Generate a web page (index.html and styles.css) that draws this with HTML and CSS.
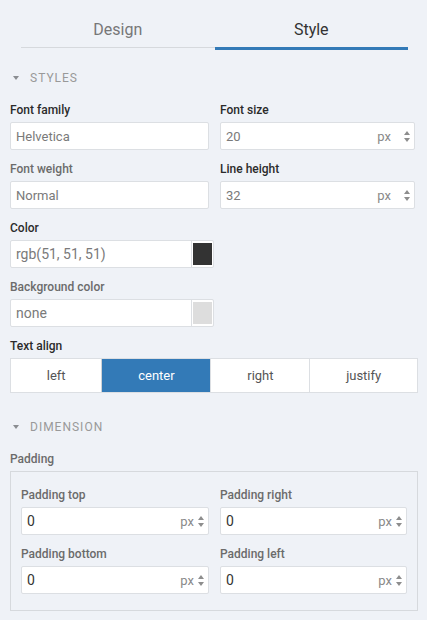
FILE: index.html
```html
<!DOCTYPE html>
<html>
<head>
<meta charset="utf-8">
<link rel="stylesheet" href="styles.css">
</head>
<body>
<div class="panel">
  <div class="tabs">
    <div class="tab">Design</div>
    <div class="tab active">Style</div>
  </div>

  <div class="section-head"><span class="caret"></span>STYLES</div>

  <div class="grid">
    <div class="field">
      <div class="label dark">Font family</div>
      <div class="input"><span class="val">Helvetica</span></div>
    </div>
    <div class="field">
      <div class="label dark">Font size</div>
      <div class="input num"><span class="val">20</span><span class="unit">px</span><span class="spin"><i class="up"></i><i class="down"></i></span></div>
    </div>
    <div class="field">
      <div class="label">Font weight</div>
      <div class="input"><span class="val">Normal</span></div>
    </div>
    <div class="field">
      <div class="label dark">Line height</div>
      <div class="input num"><span class="val">32</span><span class="unit">px</span><span class="spin"><i class="up"></i><i class="down"></i></span></div>
    </div>
  </div>

  <div class="field">
    <div class="label dark">Color</div>
    <div class="input color"><span class="val big">rgb(51, 51, 51)</span><span class="swatch-box"><span class="swatch dark-swatch"></span></span></div>
  </div>
  <div class="field">
    <div class="label">Background color</div>
    <div class="input color"><span class="val big">none</span><span class="swatch-box"><span class="swatch light-swatch"></span></span></div>
  </div>

  <div class="field">
    <div class="label dark">Text align</div>
    <div class="radio-group">
      <div class="radio">left</div>
      <div class="radio active">center</div>
      <div class="radio">right</div>
      <div class="radio">justify</div>
    </div>
  </div>

  <div class="section-head second"><span class="caret"></span>DIMENSION</div>

  <div class="field">
    <div class="label">Padding</div>
    <div class="box">
      <div class="grid inner">
        <div class="field">
          <div class="label">Padding top</div>
          <div class="input num small"><span class="val dk">0</span><span class="unit">px</span><span class="spin"><i class="up"></i><i class="down"></i></span></div>
        </div>
        <div class="field">
          <div class="label">Padding right</div>
          <div class="input num small"><span class="val dk">0</span><span class="unit">px</span><span class="spin"><i class="up"></i><i class="down"></i></span></div>
        </div>
        <div class="field last">
          <div class="label">Padding bottom</div>
          <div class="input num small"><span class="val dk">0</span><span class="unit">px</span><span class="spin"><i class="up"></i><i class="down"></i></span></div>
        </div>
        <div class="field last">
          <div class="label">Padding left</div>
          <div class="input num small"><span class="val dk">0</span><span class="unit">px</span><span class="spin"><i class="up"></i><i class="down"></i></span></div>
        </div>
      </div>
    </div>
  </div>
</div>
</body>
</html>
```

FILE: styles.css
```css
html, body {
  margin: 0;
  padding: 0;
  background: #eff2f7;
  font-family: Roboto, "Liberation Sans", sans-serif;
  color: #333;
}
.panel {
  padding: 0 9px 0 10px;
  width: 408px;
}
.tabs {
  display: flex;
  align-items: flex-start;
  margin: 0 10px 0 11px;
}
.tab {
  flex: 1;
  text-align: center;
  font-size: 16px;
  line-height: 20px;
  padding: 20px 0 7px;
  color: #777;
  border-bottom: 1px solid #d6d9dd;
}
.tab.active {
  color: #333;
  border-bottom: 3px solid #337ab7;
}
.section-head {
  margin-top: 20px;
  margin-bottom: 17px;
  padding-left: 20px;
  position: relative;
  font-size: 12px;
  line-height: 16px;
  letter-spacing: 1px;
  color: #999;
  display: flex;
  align-items: center;
}
.section-head.second {
  margin-top: 26px;
}
.caret {
  position: absolute;
  left: 3px;
  top: 6px;
  width: 0;
  height: 0;
  border-left: 3px solid transparent;
  border-right: 3px solid transparent;
  border-top: 4px solid #8a8d91;
}
.grid {
  display: grid;
  grid-template-columns: 199px 195px;
  column-gap: 11px;
}
.grid.inner {
  grid-template-columns: 188px 187px;
}
.field {
  margin-bottom: 12px;
}
.field.last {
  margin-bottom: 0;
}
.label {
  font-size: 12px;
  font-weight: 500;
  line-height: 14px;
  margin-bottom: 5px;
  color: #6b6b6b;
}
.label.dark {
  color: #2b2b2b;
}
.input {
  box-sizing: border-box;
  height: 28px;
  background: #fff;
  border: 1px solid #dcdfe3;
  border-radius: 2px;
  display: flex;
  align-items: center;
  padding-left: 5px;
}
.val {
  flex: 1;
  font-size: 13px;
  color: #7a7a7a;
}
.val.big {
  font-size: 14px;
}
.val.dk {
  color: #333;
  font-size: 14px;
}
.unit {
  font-size: 13px;
  color: #8a8a8a;
}
.spin {
  display: flex;
  flex-direction: column;
  gap: 3px;
  margin: 0 4px 0 13px;
}
.small .spin {
  margin: 0 4px 0 4px;
}
.spin i {
  display: block;
  width: 0;
  height: 0;
  border-left: 3px solid transparent;
  border-right: 3px solid transparent;
}
.spin .up {
  border-bottom: 4px solid #8d8d8d;
}
.spin .down {
  border-top: 4px solid #8d8d8d;
}
.input.color {
  width: 204px;
  padding-right: 0;
}
.swatch-box {
  align-self: stretch;
  border-left: 1px solid #dcdfe3;
  width: 21px;
  display: flex;
  align-items: center;
  justify-content: center;
}
.swatch {
  width: 19px;
  height: 22px;
}
.dark-swatch { background: #333; }
.light-swatch { background: #ddd; }
.radio-group {
  display: flex;
  border: 1px solid #dcdfe3;
  background: #fff;
  height: 35px;
  box-sizing: border-box;
}
.radio {
  flex: 1 1 auto;
  text-align: center;
  font-size: 13px;
  line-height: 33px;
  color: #555;
  border-left: 1px solid #dcdfe3;
}
.radio:first-child {
  border-left: none;
}
.radio.active {
  background: #337ab7;
  color: #fff;
  border-left-color: #cfd2d6;
}
.box {
  border: 1px solid #d6d9dd;
  padding: 16px 10px 16px 10px;
}
```
